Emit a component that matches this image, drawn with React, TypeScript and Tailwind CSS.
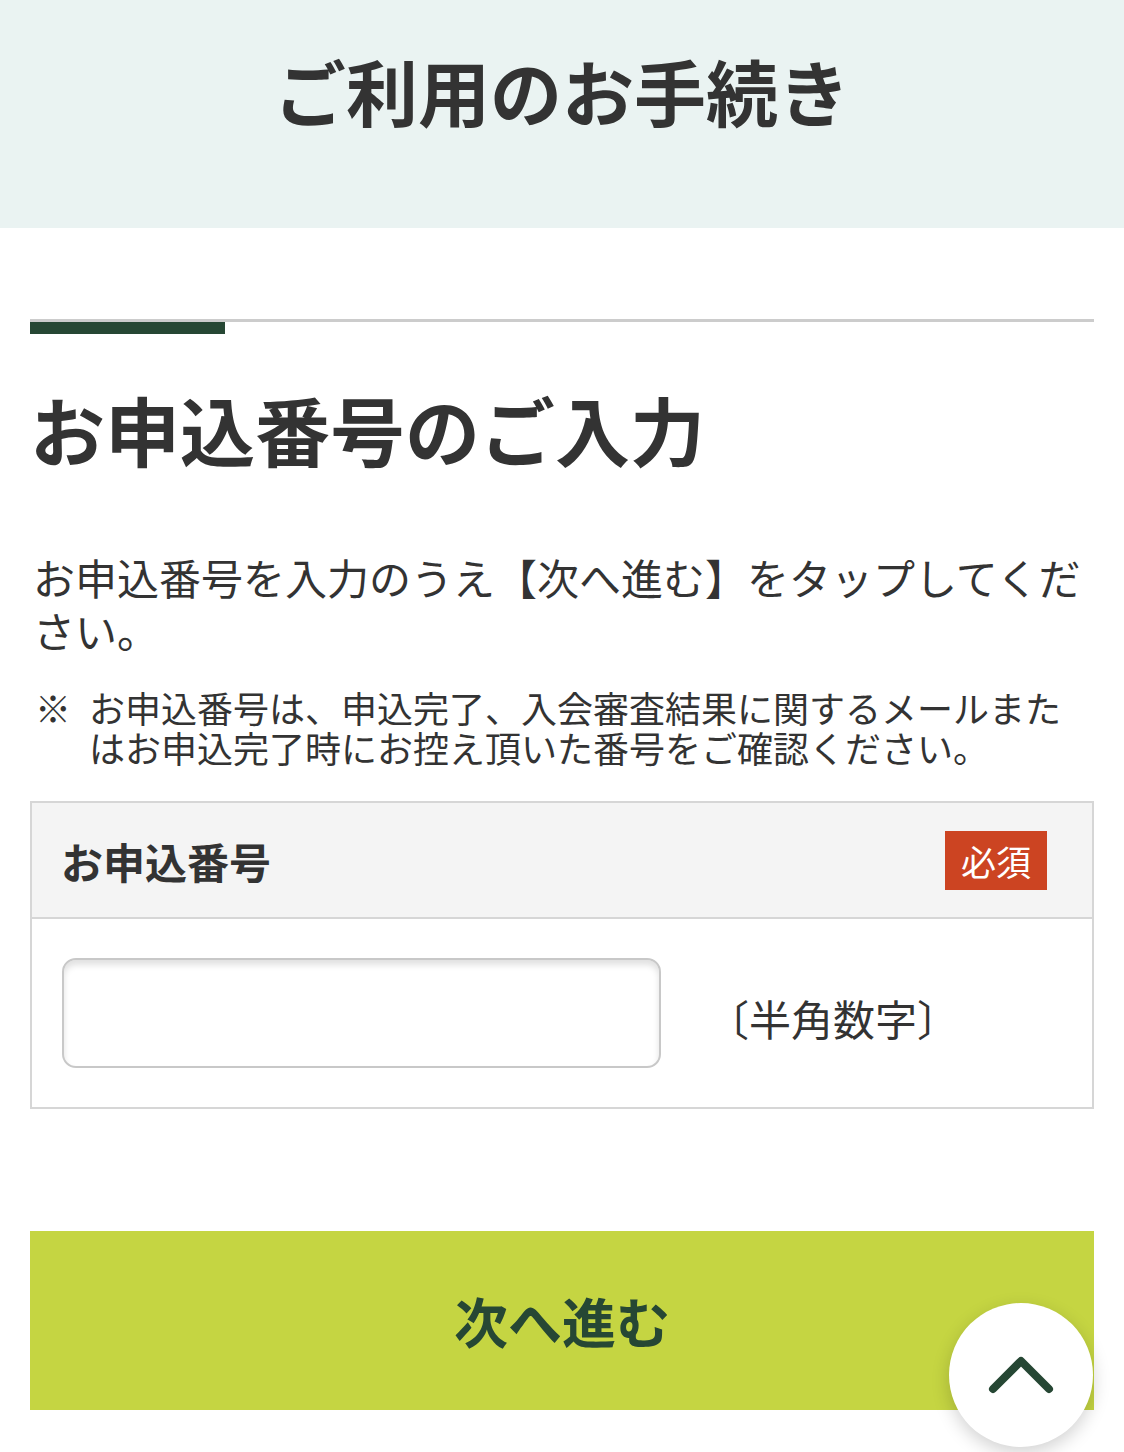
import React from "react"

const font = { fontFamily: '"Noto Sans CJK JP", "Noto Sans", sans-serif' }

function ScrollTopButton() {
  return (
    <button
      type="button"
      aria-label="ページトップへ"
      className="absolute left-[949px] top-[1303px] w-[144px] h-[144px] rounded-full bg-white shadow-[0_6px_18px_rgba(0,0,0,0.18)] flex items-center justify-center"
    >
      <svg width="72" height="44" viewBox="0 0 72 44" fill="none">
        <path
          d="M8 36 L36 8 L64 36"
          stroke="#264734"
          strokeWidth="8"
          strokeLinecap="round"
          strokeLinejoin="round"
        />
      </svg>
    </button>
  )
}

export default function App() {
  return (
    <div className="relative w-[1124px] min-h-[1452px] bg-white text-[#333]" style={font}>
      {/* Page title */}
      <header className="h-[228px] bg-[#eaf3f2] flex justify-center pt-[48px]">
        <h1 className="text-[72px] leading-[84px] font-bold">ご利用のお手続き</h1>
      </header>

      <main className="px-[30px]">
        {/* Section divider */}
        <div className="mt-[91px] border-t-[3px] border-[#cccccc]">
          <div className="w-[195px] h-[12px] bg-[#264734]" />
        </div>

        <h2 className="mt-[50px] text-[75px] leading-[90px] font-bold">お申込番号のご入力</h2>

        <p className="mt-[76px] text-[42px] leading-[53px] pl-[3px]">
          お申込番号を入力のうえ【次へ進む】をタップしてください。
        </p>

        <div className="mt-[31px] flex text-[36px] leading-[40px]">
          <span className="w-[59px] shrink-0 pl-[5px]">※</span>
          <p>お申込番号は、申込完了、入会審査結果に関するメールまたはお申込完了時にお控え頂いた番号をご確認ください。</p>
        </div>

        {/* Form table */}
        <div className="mt-[34px] border-2 border-[#d6d6d6]">
          <div className="h-[116px] bg-[#f4f4f4] border-b-2 border-[#d6d6d6] flex items-center justify-between pl-[29px] pr-[45px]">
            <span className="text-[42px] font-bold">お申込番号</span>
            <span className="h-[59px] px-[16px] bg-[#cc4422] text-white text-[35px] leading-[59px]">必須</span>
          </div>
          <div className="h-[188px] flex items-center pl-[30px]">
            <input
              type="text"
              className="w-[599px] h-[110px] rounded-[14px] border-2 border-[#c8c8c8] bg-white shadow-[inset_0_5px_6px_rgba(0,0,0,0.12)] outline-none px-4 text-[40px]"
            />
            <span className="ml-[46px] mt-[8px] text-[42px]">〔半角数字〕</span>
          </div>
        </div>

        <button
          type="button"
          className="mt-[122px] w-full h-[179px] bg-[#c5d542] text-[#264734] text-[54px] font-bold flex items-center justify-center"
        >
          次へ進む
        </button>
      </main>

      <ScrollTopButton />
    </div>
  )
}
